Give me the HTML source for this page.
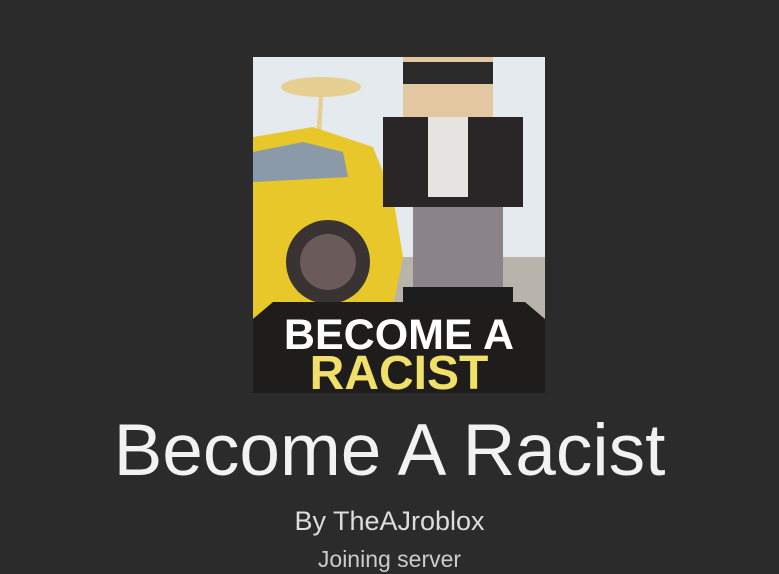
<!DOCTYPE html>
<html><head><style>
body{margin:0;width:779px;height:574px;background:#2c2b2b;overflow:hidden;position:relative;font-family:"Liberation Sans",sans-serif}
.img{position:absolute;left:253px;top:57px;width:292px;height:336px;overflow:hidden;background:linear-gradient(#e9eef2,#d8dfe4 60%,#c9c3b8)}
.t{position:absolute;left:0;width:779px;text-align:center;color:#f2f2f2;white-space:nowrap}
</style></head><body>
<div class="img">
<svg width="292" height="336" viewBox="0 0 292 336">
<rect x="0" y="0" width="292" height="260" fill="#e4eaee"/>
<g fill="#e8c87a" opacity=".8"><path d="M60 120 L66 40 L70 40 L66 120Z"/><ellipse cx="68" cy="30" rx="40" ry="10"/></g>
<rect x="0" y="200" width="292" height="80" fill="#b8b4ab"/>
<path d="M0 80 L60 70 L120 90 L140 140 L150 200 L140 250 L0 260Z" fill="#e8c72a"/>
<path d="M0 95 L50 85 L90 95 L95 120 L0 125Z" fill="#8a9aa8"/>
<circle cx="75" cy="205" r="42" fill="#3a3333"/><circle cx="75" cy="205" r="28" fill="#6a5a5a"/>
<rect x="150" y="0" width="90" height="60" fill="#e2c7a0"/>
<rect x="150" y="5" width="90" height="22" fill="#2a2a2a"/>
<rect x="130" y="60" width="140" height="90" fill="#2a2628"/>
<rect x="175" y="60" width="40" height="80" fill="#e6e3e0"/>
<rect x="160" y="150" width="90" height="90" fill="#8a8488"/>
<rect x="150" y="230" width="110" height="20" fill="#1d1d1d"/>
<path d="M0 262 L20 245 L272 245 L292 262 L292 336 L0 336Z" fill="#1f1d1c"/>
</svg>
<div style="position:absolute;left:0;width:292px;top:255px;text-align:center;font-weight:bold;color:#fff;font-size:43px;line-height:46px;white-space:nowrap">BECOME A</div>
<div style="position:absolute;left:0;width:292px;top:295px;text-align:center;font-weight:bold;color:#f0e06a;font-size:48px;line-height:44px;white-space:nowrap">RACIST</div>
</div>
<div class="t" style="top:411px;font-size:73px;line-height:80px">Become A Racist</div>
<div class="t" style="top:504px;font-size:27px;line-height:34px;color:#ddd">By TheAJroblox</div>
<div class="t" style="top:544px;font-size:23px;line-height:30px;color:#ccc">Joining server</div>
</body></html>
